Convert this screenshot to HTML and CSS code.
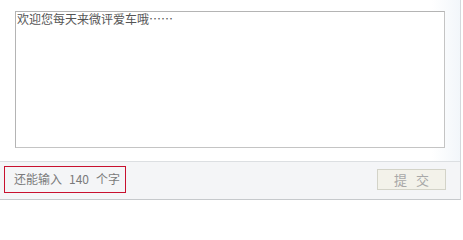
FILE: index.html
```html
<!DOCTYPE html>
<html lang="zh-CN">
<head>
<meta charset="utf-8">
<title>微评</title>
<link rel="stylesheet" href="styles.css">
</head>
<body>
<div class="card">
  <div class="editor">
    <textarea class="input">欢迎您每天来微评爱车哦……</textarea>
  </div>
  <div class="footer">
    <div class="counter">还能输入<span class="num">140</span>个字</div>
    <button class="submit" type="button">提 交</button>
  </div>
</div>
</body>
</html>
```
FILE: styles.css
```css
html, body {
  margin: 0;
  padding: 0;
  background: #fff;
  font-family: "Noto Sans CJK SC", "Liberation Sans", sans-serif;
  font-size: 12px;
}
.card {
  width: 460px;
  border-right: 1px solid #d4d8dc;
  border-bottom: 1px solid #c6c9cc;
  background: #fff;
}
.editor {
  padding: 11px 0 13px 15px;
  background: linear-gradient(to right, #fff 0, #fff 432px, #f2f6fa 460px);
}
.input {
  display: block;
  box-sizing: border-box;
  width: 430px;
  height: 137px;
  margin: 0;
  padding: 0 1px;
  border: 1px solid #b4b4b4;
  border-right-color: #c4c4c4;
  border-bottom-color: #c4c4c4;
  resize: none;
  outline: none;
  font-family: "Noto Sans CJK SC", sans-serif;
  font-size: 12px;
  line-height: 14px;
  color: #555;
  background: #fff;
}
.footer {
  display: flex;
  align-items: center;
  justify-content: space-between;
  height: 38px;
  box-sizing: border-box;
  padding: 4px 14px 7px 4px;
  border-top: 1px solid #dcdfe2;
  background: #f4f5f7;
}
.counter {
  box-sizing: border-box;
  width: 122px;
  height: 27px;
  display: flex;
  align-items: center;
  padding-left: 9px;
  border: 1px solid #c8102e;
  color: #7a7a7a;
  font-size: 12px;
  line-height: 14px;
}
.num {
  margin: 0 7px;
}
.submit {
  box-sizing: border-box;
  width: 69px;
  height: 21px;
  margin: 0;
  padding: 0;
  border: 1px solid #d3d3c8;
  background: #f3f2ea;
  color: #a8a8a8;
  font-family: "Noto Sans CJK SC", sans-serif;
  font-size: 13px;
  line-height: 19px;
  letter-spacing: 3px;
  text-indent: 3px;
}
```
